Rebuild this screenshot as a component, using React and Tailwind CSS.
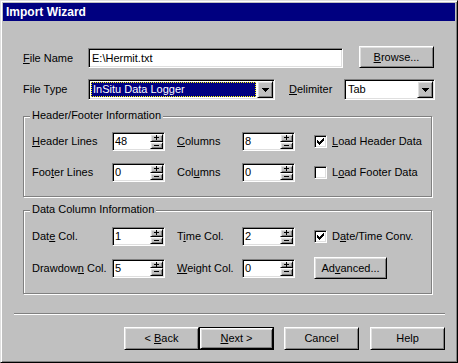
const sunken =
  "border border-t-[#808080] border-l-[#808080] border-b-white border-r-white shadow-[inset_1px_1px_0_#000,inset_-1px_-1px_0_#dfdfdf]";
const raised =
  "border border-t-white border-l-white border-b-black border-r-black shadow-[inset_1px_1px_0_#dfdfdf,inset_-1px_-1px_0_#808080]";

function Btn({ children, className = "", isDefault }) {
  if (isDefault) {
    return (
      <div className={`border border-black ${className}`}>
        <div className={`${raised} w-full h-full flex items-center justify-center`}>{children}</div>
      </div>
    );
  }
  return <div className={`${raised} flex items-center justify-center ${className}`}>{children}</div>;
}

function SpinBtn({ plus }) {
  return (
    <div className={`${raised} flex-1 w-[13px] flex items-center justify-center bg-[#c0c0c0]`}>
      <svg width="7" height="5" viewBox="0 0 7 5" shapeRendering="crispEdges">
        <rect x="1" y="2" width="5" height="1" fill="#000" />
        {plus && <rect x="3" y="0" width="1" height="5" fill="#000" />}
      </svg>
    </div>
  );
}

function Spin({ value }) {
  return (
    <div className={`${sunken} w-[53px] h-[19px] bg-white flex`}>
      <div className="flex-1 pl-[2px] leading-[17px]">{value}</div>
      <div className="flex flex-col py-[1px] pr-[1px]">
        <SpinBtn plus />
        <SpinBtn />
      </div>
    </div>
  );
}

function Combo({ className = "", selected, children }) {
  return (
    <div className={`${sunken} h-[21px] bg-white flex p-[1px] ${className}`}>
      <div className="flex-1 flex items-center p-[1px]">
        {selected ? (
          <div className="w-full h-full bg-[#000080] text-white border border-dotted border-[#ffff00] flex items-center pl-[1px]">
            {children}
          </div>
        ) : (
          <div className="pl-[1px]">{children}</div>
        )}
      </div>
      <div className={`${raised} w-[16px] flex items-center justify-center bg-[#c0c0c0]`}>
        <svg width="7" height="4" viewBox="0 0 7 4" shapeRendering="crispEdges">
          <path d="M0 0h7v1h-1v1h-1v1h-1v1h-1v-1h-1v-1h-1v-1h-1z" fill="#000" />
        </svg>
      </div>
    </div>
  );
}

function Check({ checked }) {
  return (
    <div className={`${sunken} w-[13px] h-[13px] bg-white flex items-center justify-center shrink-0`}>
      {checked && (
        <svg width="7" height="7" viewBox="0 0 7 7" shapeRendering="crispEdges" fill="#000">
          <rect x="6" y="0" width="1" height="1" />
          <rect x="5" y="1" width="2" height="1" />
          <rect x="0" y="2" width="1" height="1" />
          <rect x="4" y="2" width="3" height="1" />
          <rect x="0" y="3" width="2" height="1" />
          <rect x="3" y="3" width="3" height="1" />
          <rect x="0" y="4" width="5" height="1" />
          <rect x="1" y="5" width="3" height="1" />
          <rect x="2" y="6" width="1" height="1" />
        </svg>
      )}
    </div>
  );
}

function Group({ title, className = "", children }) {
  return (
    <div className={`relative border border-[#808080] shadow-[inset_1px_1px_0_#fff,1px_1px_0_#fff] ${className}`}>
      <span className="absolute -top-[8px] left-[6px] bg-[#c0c0c0] px-[2px] leading-[13px]">{title}</span>
      {children}
    </div>
  );
}

export default function App() {
  return (
    <div className="w-[458px] h-[363px] bg-[#c0c0c0] border border-t-[#dfdfdf] border-l-[#dfdfdf] border-b-black border-r-black shadow-[inset_1px_1px_0_#fff,inset_-1px_-1px_0_#808080] p-[2px] font-['Liberation_Sans',Arial,sans-serif] text-[11px] text-black">
      <div className="h-[18px] bg-[#000080] flex items-center pl-[3px] text-white font-bold text-[12px]">Import Wizard</div>

      <div className="pl-[11px]">
        {/* file name */}
        <div className="mt-[25px] ml-[9px] flex items-end h-[22px]">
          <div className="w-[65px] h-[20px] flex items-center">
            <span><u>F</u>ile Name</span>
          </div>
          <div className={`${sunken} w-[255px] h-[20px] bg-white pl-[3px] flex items-center`}>{"E:\\Hermit.txt"}</div>
          <Btn className="ml-[16px] w-[75px] h-[22px]">
            <span><u>B</u>rowse...</span>
          </Btn>
        </div>

        {/* file type */}
        <div className="mt-[11px] ml-[9px] flex items-center h-[21px]">
          <div className="w-[65px]">File Type</div>
          <Combo className="w-[187px]" selected>InSitu Data Logger</Combo>
          <div className="ml-[14px] w-[55px]">
            <u>D</u>elimiter
          </div>
          <Combo className="w-[91px]">Tab</Combo>
        </div>

        <Group title="Header/Footer Information" className="mt-[16px] ml-[9px] w-[409px] h-[81px] pt-[15px] pl-[8px]">
          <div className="flex items-center h-[19px]">
            <div className="w-[80px]">
              <u>H</u>eader Lines
            </div>
            <Spin value="48" />
            <div className="ml-[12px] w-[65px]">
              <u>C</u>olumns
            </div>
            <Spin value="8" />
            <div className="ml-[19px]">
              <Check checked />
            </div>
            <div className="ml-[5px]">
              <u>L</u>oad Header Data
            </div>
          </div>
          <div className="mt-[12px] flex items-center h-[19px]">
            <div className="w-[80px]">
              Foo<u>t</u>er Lines
            </div>
            <Spin value="0" />
            <div className="ml-[12px] w-[65px]">
              Col<u>u</u>mns
            </div>
            <Spin value="0" />
            <div className="ml-[19px]">
              <Check />
            </div>
            <div className="ml-[5px]">
              L<u>o</u>ad Footer Data
            </div>
          </div>
        </Group>

        <Group title="Data Column Information" className="mt-[13px] ml-[9px] w-[409px] h-[84px] pt-[16px] pl-[8px]">
          <div className="flex items-center h-[19px]">
            <div className="w-[80px]">
              Dat<u>e</u> Col.
            </div>
            <Spin value="1" />
            <div className="ml-[12px] w-[65px]">
              T<u>i</u>me Col.
            </div>
            <Spin value="2" />
            <div className="ml-[19px]">
              <Check checked />
            </div>
            <div className="ml-[5px]">
              D<u>a</u>te/Time Conv.
            </div>
          </div>
          <div className="mt-[11px] flex items-center h-[22px]">
            <div className="w-[80px]">
              Drawdow<u>n</u> Col.
            </div>
            <Spin value="5" />
            <div className="ml-[12px] w-[65px]">
              <u>W</u>eight Col.
            </div>
            <Spin value="0" />
            <Btn className="ml-[19px] w-[73px] h-[22px]">
              <span>
                Ad<u>v</u>anced...
              </span>
            </Btn>
          </div>
        </Group>

        <div className="mt-[19px] w-[431px] h-0 border-t border-b border-t-[#808080] border-b-white" />

        <div className="mt-[12px] ml-[110px] flex">
          <Btn className="w-[75px] h-[23px]">
            <span>
              &lt; <u>B</u>ack
            </span>
          </Btn>
          <Btn isDefault className="w-[75px] h-[23px]">
            <span>
              <u>N</u>ext &gt;
            </span>
          </Btn>
          <Btn className="ml-[10px] w-[75px] h-[23px]">Cancel</Btn>
          <Btn className="ml-[11px] w-[75px] h-[23px]">Help</Btn>
        </div>
      </div>
    </div>
  );
}
